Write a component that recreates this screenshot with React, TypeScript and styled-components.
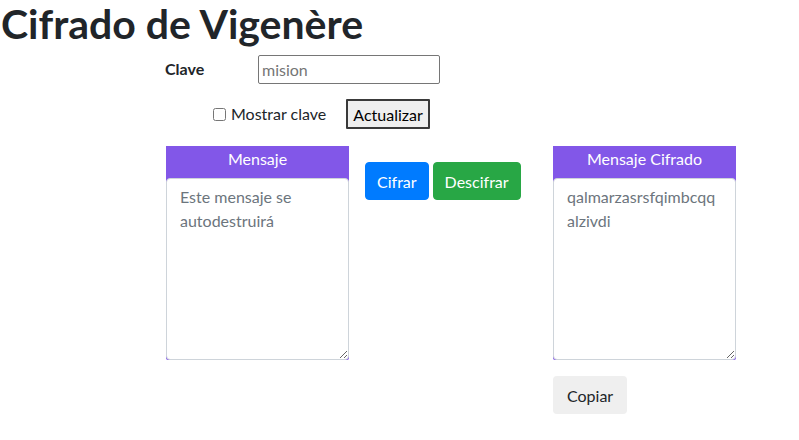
import * as React from 'react'
import styled, { createGlobalStyle } from 'styled-components'

const FONT = `Lato, 'Noto Sans', 'Liberation Sans', sans-serif`
const PURPLE = '#8257e8'

const GlobalStyle = createGlobalStyle`
  html, body {
    margin: 0;
    padding: 0;
    background: #fff;
  }
  body {
    font-family: ${FONT};
    font-size: 16px;
    line-height: 1.5;
    color: #212529;
  }
`

const Title = styled.h1`
  margin: 0;
  padding-left: 1px;
  font-size: 41px;
  font-weight: 700;
  line-height: 48px;
  color: #212529;
`

const Content = styled.div`
  margin-left: 165px;
  width: 571px;
`

const KeyRow = styled.div`
  display: flex;
  align-items: center;
  margin-top: 6px;
  height: 30px;
`

const KeyLabel = styled.label`
  width: 93px;
  font-weight: 700;
  font-size: 16px;
`

const KeyInput = styled.input`
  box-sizing: border-box;
  width: 182px;
  height: 29px;
  padding: 1px 3px;
  border: 1px solid #767676;
  border-radius: 2px;
  font-family: ${FONT};
  font-size: 16px;
  color: #212529;

  &::placeholder {
    color: #757575;
  }
`

const OptionsRow = styled.div`
  display: flex;
  align-items: center;
  margin-top: 15px;
  padding-left: 47px;
  height: 30px;
`

const CheckLabel = styled.label`
  display: flex;
  align-items: center;
  font-size: 16px;
  margin-right: 20px;

  input {
    width: 13px;
    height: 13px;
    margin: 0 5px 0 1px;
  }
`

const PlainButton = styled.button`
  box-sizing: border-box;
  height: 30px;
  padding: 0 5px;
  background: #efefef;
  border: 2px solid #3a3a3a;
  border-radius: 1px;
  font-family: ${FONT};
  font-size: 16px;
  color: #000;
`

const Workspace = styled.div`
  display: grid;
  grid-template-columns: 183px 172px 183px;
  column-gap: 16px;
  margin-top: 16px;
  padding-top: 1px;
  margin-left: 1px;
  align-items: start;
`

const Panel = styled.div`
  display: flex;
  flex-direction: column;
`

const PanelBox = styled.div`
  display: flex;
  flex-direction: column;
  background: ${PURPLE};
  border-radius: 0 0 2px 2px;
`

const PanelHeader = styled.div`
  height: 32px;
  line-height: 26px;
  text-align: center;
  color: #fff;
  font-size: 16px;
`

const TextArea = styled.textarea`
  box-sizing: border-box;
  display: block;
  width: 100%;
  height: 182px;
  margin: 0;
  padding: 6px 13px;
  border: 1px solid #ced4da;
  border-radius: 4px;
  background: #fff;
  font-family: ${FONT};
  font-size: 16px;
  line-height: 24px;
  color: #495057;
  resize: vertical;

  &::placeholder {
    color: #6c757d;
  }
`

const Actions = styled.div`
  display: flex;
  gap: 4px;
  margin-top: 16px;
`

const ActionButton = styled.button<{ tone: string }>`
  box-sizing: border-box;
  height: 38px;
  padding: 0 11px;
  border: 1px solid ${({ tone }) => tone};
  border-radius: 4px;
  background: ${({ tone }) => tone};
  color: #fff;
  font-family: ${FONT};
  font-size: 16px;
`

const CopyButton = styled.button`
  box-sizing: border-box;
  align-self: flex-start;
  height: 38px;
  margin-top: 16px;
  padding: 0 14px;
  border: none;
  border-radius: 4px;
  background: #efefef;
  color: #212529;
  font-family: ${FONT};
  font-size: 16px;
`

export default function App() {
  const [show, setShow] = React.useState(false)

  return (
    <>
      <GlobalStyle />
      <Title>Cifrado de Vigenère</Title>
      <Content>
        <KeyRow>
          <KeyLabel htmlFor="clave">Clave</KeyLabel>
          <KeyInput id="clave" type="text" placeholder="mision" />
        </KeyRow>
        <OptionsRow>
          <CheckLabel>
            <input type="checkbox" checked={show} onChange={() => setShow(!show)} />
            Mostrar clave
          </CheckLabel>
          <PlainButton>Actualizar</PlainButton>
        </OptionsRow>
        <Workspace>
          <Panel>
            <PanelBox>
              <PanelHeader>Mensaje</PanelHeader>
              <TextArea placeholder="Este mensaje se autodestruirá" />
            </PanelBox>
          </Panel>
          <Actions>
            <ActionButton tone="#007bff">Cifrar</ActionButton>
            <ActionButton tone="#28a745">Descifrar</ActionButton>
          </Actions>
          <Panel>
            <PanelBox>
              <PanelHeader>Mensaje Cifrado</PanelHeader>
              <TextArea readOnly placeholder="qalmarzasrsfqimbcqq alzivdi" />
            </PanelBox>
            <CopyButton>Copiar</CopyButton>
          </Panel>
        </Workspace>
      </Content>
    </>
  )
}
